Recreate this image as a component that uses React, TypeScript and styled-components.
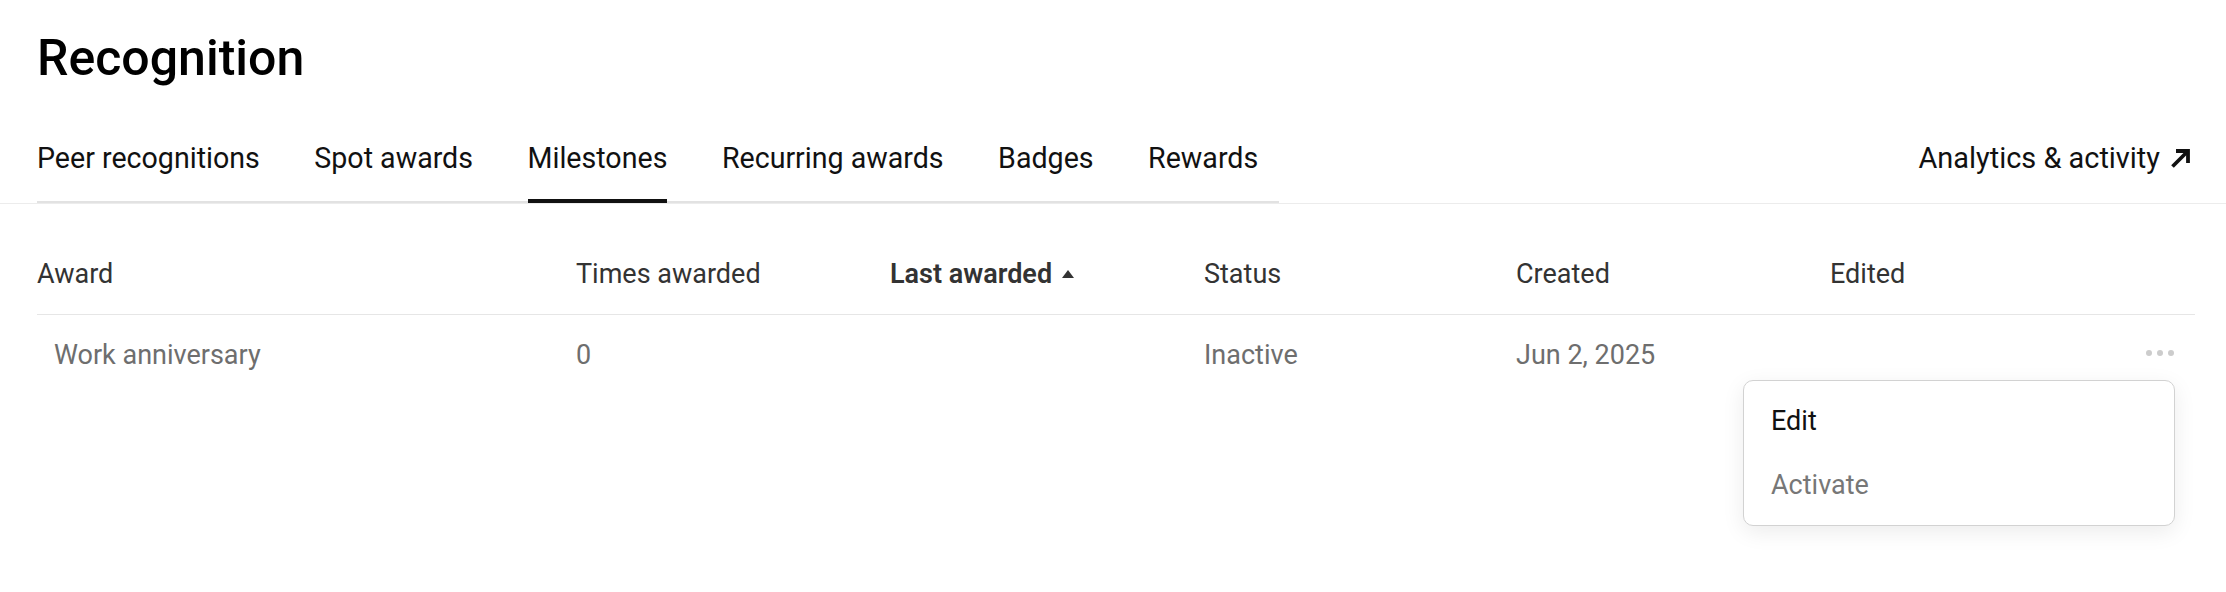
import React, { FC } from "react";
import styled, { createGlobalStyle } from "styled-components";

const GlobalStyle = createGlobalStyle`
  body {
    margin: 0;
    background: #ffffff;
    font-family: Roboto, "Liberation Sans", Arial, sans-serif;
  }
`;

const tabs = ["Peer recognitions", "Spot awards", "Milestones", "Recurring awards", "Badges", "Rewards"];

const columns = [
  { label: "Award" },
  { label: "Times awarded" },
  { label: "Last awarded", sorted: true },
  { label: "Status" },
  { label: "Created" },
  { label: "Edited" },
];

const App: FC = () => {
  return (
    <>
      <GlobalStyle />
      <Page>
        <Title>Recognition</Title>
        <NavBar>
          <TabList>
            {tabs.map((tab) => (
              <Tab key={tab} $active={tab === "Milestones"}>
                {tab}
              </Tab>
            ))}
          </TabList>
          <AnalyticsLink href="#">
            Analytics &amp; activity
            <svg width="24" height="24" viewBox="0 0 24 24" fill="none">
              <path d="M3.5 20.5 L18.5 5.5" stroke="#111" strokeWidth="3.8" />
              <path d="M7 5 H19 V17" stroke="#111" strokeWidth="3.8" />
            </svg>
          </AnalyticsLink>
        </NavBar>

        <Table>
          <HeaderRow>
            {columns.map((col) => (
              <HeaderCell key={col.label} $sorted={col.sorted}>
                {col.label}
                {col.sorted && (
                  <svg width="12" height="8" viewBox="0 0 12 8">
                    <path d="M6 0 L12 8 H0 Z" fill="#333" />
                  </svg>
                )}
              </HeaderCell>
            ))}
            <HeaderCell />
          </HeaderRow>
          <BodyRow>
            <NameCell>Work anniversary</NameCell>
            <Cell>0</Cell>
            <Cell />
            <Cell>Inactive</Cell>
            <Cell>Jun 2, 2025</Cell>
            <Cell />
            <ActionsCell>
              <Dots>
                <Dot />
                <Dot />
                <Dot />
              </Dots>
            </ActionsCell>
          </BodyRow>

          <Menu>
            <MenuItem>Edit</MenuItem>
            <MenuItem $muted>Activate</MenuItem>
          </Menu>
        </Table>
      </Page>
    </>
  );
};

const Page = styled.div`
  min-height: 592px;
  background: #ffffff;
  padding-top: 28px;
`;

const Title = styled.h1`
  margin: 0 0 50px 37px;
  font-size: 50px;
  line-height: 60px;
  font-weight: 500;
  color: #000000;
`;

const NavBar = styled.div`
  display: flex;
  align-items: flex-start;
  justify-content: space-between;
  padding: 0 33px 0 37px;
  border-bottom: 1px solid #ececec;
`;

const TabList = styled.div`
  display: flex;
  gap: 54.5px;
  width: 1242px;
  box-shadow: inset 0 -2px 0 #e2e2e2;
`;

const Tab = styled.div<{ $active?: boolean }>`
  font-size: 28.6px;
  line-height: 40px;
  color: #111111;
  padding-bottom: 21px;
  border-bottom: 4px solid ${(p) => (p.$active ? "#111111" : "transparent")};
  cursor: pointer;
`;

const AnalyticsLink = styled.a`
  display: flex;
  align-items: center;
  gap: 9px;
  font-size: 28.9px;
  line-height: 40px;
  color: #111111;
  text-decoration: none;
`;

const Table = styled.div`
  position: relative;
  margin: 30px 31px 0 37px;
`;

const gridColumns = "539px 314px 314px 312px 314px 1fr 80px";

const HeaderRow = styled.div`
  display: grid;
  grid-template-columns: ${gridColumns};
  align-items: center;
  height: 80px;
  border-bottom: 1px solid #e6e6e6;
`;

const HeaderCell = styled.div<{ $sorted?: boolean }>`
  display: flex;
  align-items: center;
  gap: 10px;
  font-size: 27px;
  font-weight: ${(p) => (p.$sorted ? 600 : 400)};
  color: #333333;
`;

const BodyRow = styled.div`
  display: grid;
  grid-template-columns: ${gridColumns};
  align-items: center;
  height: 80px;
`;

const Cell = styled.div`
  font-size: 27px;
  color: #6e6e6e;
`;

const NameCell = styled(Cell)`
  padding-left: 17px;
`;

const ActionsCell = styled.div`
  display: flex;
  justify-content: flex-end;
  padding: 0 21px 4px 0;
`;

const Dots = styled.div`
  display: flex;
  gap: 5px;
`;

const Dot = styled.span`
  width: 6px;
  height: 6px;
  border-radius: 50%;
  background: #cccccc;
`;

const Menu = styled.div`
  position: absolute;
  top: 146px;
  right: 20px;
  width: 430px;
  padding: 8px 0;
  background: #ffffff;
  border: 1px solid #d2d2d2;
  border-radius: 10px;
  box-shadow: 0 6px 22px rgba(0, 0, 0, 0.08);
`;

const MenuItem = styled.div<{ $muted?: boolean }>`
  display: flex;
  align-items: center;
  height: 64px;
  padding-left: 27px;
  font-size: 27px;
  color: ${(p) => (p.$muted ? "#777777" : "#111111")};
`;

export default App;
